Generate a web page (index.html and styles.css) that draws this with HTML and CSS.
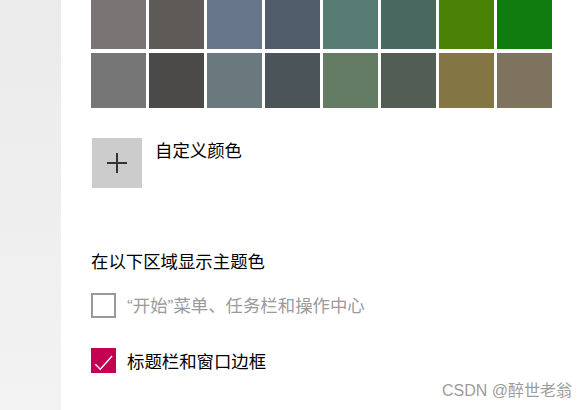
FILE: index.html
```html
<!DOCTYPE html>
<html lang="zh-CN">
<head>
<meta charset="utf-8">
<title>颜色</title>
<link rel="stylesheet" href="styles.css">
</head>
<body>
<div class="page">
  <aside class="sidebar"></aside>
  <main class="content">
    <div class="swatches">
      <div class="swatch" style="background:#7a7574"></div>
      <div class="swatch" style="background:#5d5a58"></div>
      <div class="swatch" style="background:#68768a"></div>
      <div class="swatch" style="background:#515c6b"></div>
      <div class="swatch" style="background:#567c73"></div>
      <div class="swatch" style="background:#486860"></div>
      <div class="swatch" style="background:#498205"></div>
      <div class="swatch" style="background:#107c10"></div>
      <div class="swatch" style="background:#767676"></div>
      <div class="swatch" style="background:#4c4a48"></div>
      <div class="swatch" style="background:#69797e"></div>
      <div class="swatch" style="background:#4a5459"></div>
      <div class="swatch" style="background:#647c64"></div>
      <div class="swatch" style="background:#525e54"></div>
      <div class="swatch" style="background:#847545"></div>
      <div class="swatch" style="background:#7e735f"></div>
    </div>

    <div class="custom">
      <div class="plus-btn">
        <svg width="20" height="20" viewBox="0 0 20 20"><path d="M10 0v20M0 10h20" stroke="#333" stroke-width="2"/></svg>
      </div>
      <span class="custom-label">自定义颜色</span>
    </div>

    <h2 class="heading">在以下区域显示主题色</h2>

    <div class="checks">
      <label class="check disabled">
        <span class="box"></span>
        <span class="check-text"><span class="quote">“</span>开始<span class="quote">”</span>菜单、任务栏和操作中心</span>
      </label>
      <label class="check">
        <span class="box checked">
          <svg width="25" height="25" viewBox="0 0 25 25"><path d="M4.3 16.2l5 5 11.8-13.2" fill="none" stroke="#fff" stroke-width="1.4"/></svg>
        </span>
        <span class="check-text">标题栏和窗口边框</span>
      </label>
    </div>
  </main>
  <div class="watermark">CSDN @醉世老翁</div>
</div>
</body>
</html>
```

FILE: styles.css
```css
html, body {
  margin: 0;
  padding: 0;
  background: #fff;
}

body {
  font-family: "Noto Sans CJK SC", "Microsoft YaHei", sans-serif;
  color: #000;
}

.page {
  position: relative;
  display: flex;
  width: 587px;
  height: 410px;
  overflow: hidden;
}

.sidebar {
  width: 61px;
  flex: none;
  background: linear-gradient(to bottom, #ebebeb 0%, #eeeeee 50%, #f3f3f3 100%);
}

.content {
  flex: 1;
  padding-left: 30px;
  margin-top: -6px;
}

.swatches {
  display: grid;
  grid-template-columns: repeat(8, 55px);
  grid-auto-rows: 55px;
  column-gap: 3px;
  row-gap: 4px;
}

.custom {
  display: flex;
  align-items: flex-start;
  margin-top: 30px;
  margin-left: 1px;
  gap: 13px;
}

.plus-btn {
  width: 50px;
  height: 50px;
  background: #cccccc;
  display: flex;
  align-items: center;
  justify-content: center;
}

.custom-label {
  font-size: 17.4px;
  line-height: 22px;
  margin-top: 1px;
}

.heading {
  margin: 62px 0 0;
  font-size: 17.4px;
  font-weight: normal;
  line-height: 22px;
}

.checks {
  display: flex;
  flex-direction: column;
  gap: 30px;
  margin-top: 21px;
}

.check {
  display: flex;
  align-items: center;
  gap: 11px;
  font-size: 17.4px;
  line-height: 22px;
}

.quote {
  font-family: "Liberation Sans", sans-serif;
}

.box {
  width: 25px;
  height: 25px;
  box-sizing: border-box;
  border: 2px solid #999;
  display: block;
}

.box.checked {
  border: none;
  background: #c30052;
}

.box svg {
  display: block;
}

.disabled .check-text {
  color: #9a9a9a;
}

.watermark {
  position: absolute;
  right: 15px;
  bottom: 10px;
  font-family: "Liberation Sans", "Noto Sans CJK SC", sans-serif;
  font-size: 16px;
  line-height: 18px;
  color: #9c9c9c;
  text-shadow: 0 0 2px #fff;
}
```
